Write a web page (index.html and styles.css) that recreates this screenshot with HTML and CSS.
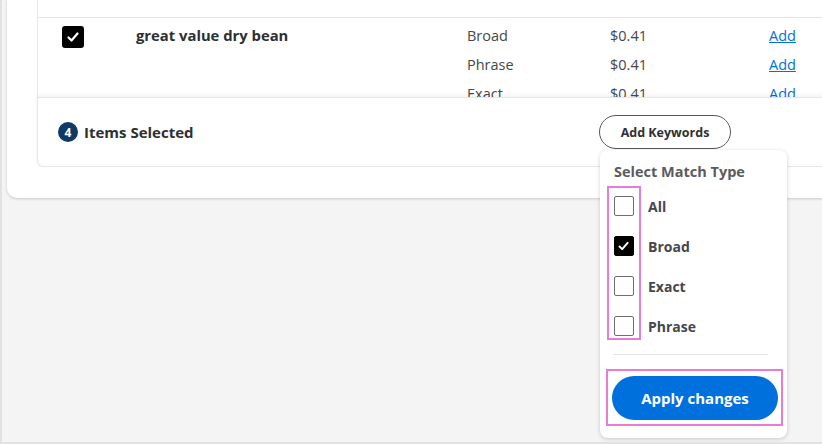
FILE: index.html
```html
<!DOCTYPE html>
<html>
<head>
<meta charset="utf-8">
<link rel="stylesheet" href="styles.css">
</head>
<body>
<div class="frame">
  <div class="card">
    <div class="table">
      <div class="prev-row"></div>
      <div class="row">
        <div class="cell cb-cell">
          <span class="cb cb-on">
            <svg viewBox="0 0 22 22" width="22" height="22"><path d="M6.5 11.5 L9.5 14.5 L15.5 7.5" fill="none" stroke="#fff" stroke-width="2.2" stroke-linecap="round" stroke-linejoin="round"/></svg>
          </span>
        </div>
        <div class="cell name">great value dry bean</div>
        <div class="cell lines">
          <span>Broad</span><span>Phrase</span><span>Exact</span>
        </div>
        <div class="cell lines">
          <span>$0.41</span><span>$0.41</span><span>$0.41</span>
        </div>
        <div class="cell lines links">
          <a href="#">Add</a><a href="#">Add</a><a href="#">Add</a>
        </div>
      </div>
    </div>
    <div class="footer">
      <div class="selected">
        <span class="badge">4</span>
        <span class="sel-text">Items Selected</span>
      </div>
      <div class="kw-wrap">
        <button class="btn-outline">Add Keywords</button>
        <div class="menu">
          <div class="menu-title">Select Match Type</div>
          <div class="options">
            <div class="hl-col"></div>
            <label class="opt"><span class="box"></span><span>All</span></label>
            <label class="opt"><span class="box box-on"><svg viewBox="0 0 20 20" width="18" height="18"><path d="M5 10.5 L8 13.5 L14 6.5" fill="none" stroke="#fff" stroke-width="2.2" stroke-linecap="round" stroke-linejoin="round"/></svg></span><span>Broad</span></label>
            <label class="opt"><span class="box"></span><span>Exact</span></label>
            <label class="opt"><span class="box"></span><span>Phrase</span></label>
          </div>
          <div class="sep"></div>
          <div class="apply-hl">
            <button class="btn-apply">Apply changes</button>
          </div>
        </div>
      </div>
    </div>
  </div>
</div>
</body>
</html>
```

FILE: styles.css
```css
* { box-sizing: border-box; }
html, body { margin: 0; padding: 0; }
body {
  font-family: "Open Sans", Lato, "Liberation Sans", sans-serif;
  background: #f4f4f4;
  color: #2e2f32;
}
.frame {
  width: 822px;
  height: 444px;
  background: #f4f4f4;
  border-left: 2px solid #e2e2e2;
  border-bottom: 2px solid #e2e2e2;
  overflow: hidden;
  padding-left: 5px;
}
.card {
  background: #fff;
  width: 830px;
  height: 198px;
  border-bottom-left-radius: 10px;
  box-shadow: 0 1px 3px rgba(0,0,0,0.18);
  padding-left: 30px;
  display: flex;
  flex-direction: column;
}
.table {
  height: 97px;
  overflow: hidden;
  border-left: 1px solid #e8e8e8;
}
.prev-row {
  height: 18px;
  border-bottom: 1px solid #e6e6e6;
}
.row {
  display: grid;
  grid-template-columns: 74px 331px 143px 159px 60px;
  padding-left: 24px;
  padding-top: 3px;
}
.cell { font-size: 14.5px; line-height: 29px; }
.cb-cell { padding-top: 5px; }
.cb {
  display: block;
  width: 22px;
  height: 22px;
  border-radius: 3px;
}
.cb-on { background: #000; }
.cb svg { display: block; }
.name { font-weight: 700; color: #2e2f32; font-size: 14.8px; }
.lines { display: flex; flex-direction: column; color: #46474a; }
.links a { color: #0071dc; text-decoration: underline; }

.footer {
  height: 70px;
  border: 1px solid #e6e6e6;
  border-right: none;
  border-bottom-left-radius: 6px;
  box-shadow: 0 -2px 4px rgba(0,0,0,0.05);
  display: grid;
  grid-template-columns: 541px auto;
  align-items: center;
  padding-left: 20px;
  position: relative;
}
.selected { display: flex; align-items: center; gap: 6px; }
.badge {
  width: 20px; height: 20px;
  border-radius: 50%;
  background: #0d3b66;
  color: #fff;
  font-size: 12px;
  font-weight: 700;
  display: flex; align-items: center; justify-content: center;
}
.sel-text { font-size: 15px; font-weight: 700; color: #2e2f32; }
.kw-wrap { position: relative; }
.btn-outline {
  display: block;
  font-family: inherit;
  font-size: 12.5px;
  font-weight: 700;
  color: #2e2f32;
  background: #fff;
  border: 1.5px solid #55575b;
  border-radius: 18px;
  height: 34px;
  width: 132px;
  padding: 0;
}
.menu {
  position: absolute;
  left: 1px;
  top: 35px;
  width: 187px;
  height: 288px;
  background: #fff;
  border-radius: 8px;
  box-shadow: 0 1px 4px rgba(0,0,0,0.18);
  padding: 10px 10px 0 14px;
  z-index: 2;
}
.menu-title {
  font-size: 14.5px;
  font-weight: 700;
  color: #5a5b5e;
  line-height: 24px;
  margin-bottom: 12px;
}
.options { position: relative; display: flex; flex-direction: column; gap: 20px; }
.hl-col {
  position: absolute;
  left: -7px; top: -10px;
  width: 34px; height: 154px;
  border: 2px solid #e77cd0;
}
.opt {
  display: flex; align-items: center; gap: 14px;
  font-size: 14px; font-weight: 700; color: #46474a;
  height: 20px;
}
.box {
  width: 20px; height: 20px;
  border: 1.5px solid #6d6e71;
  border-radius: 2px;
  display: flex; align-items: center; justify-content: center;
}
.box-on { background: #000; border-color: #000; }
.box svg { display: block; }
.sep {
  height: 1px;
  background: #e3e3e3;
  margin: 18px 9px 0 -1px;
}
.apply-hl {
  margin: 14px -6px 0 -8px;
  border: 2px solid #e77cd0;
  padding: 5px 3px 4px 4px;
}
.btn-apply {
  display: block;
  width: 100%;
  height: 44px;
  border: none;
  border-radius: 22px;
  background: #0071dc;
  color: #fff;
  font-family: inherit;
  font-size: 15px;
  font-weight: 700;
}
```
